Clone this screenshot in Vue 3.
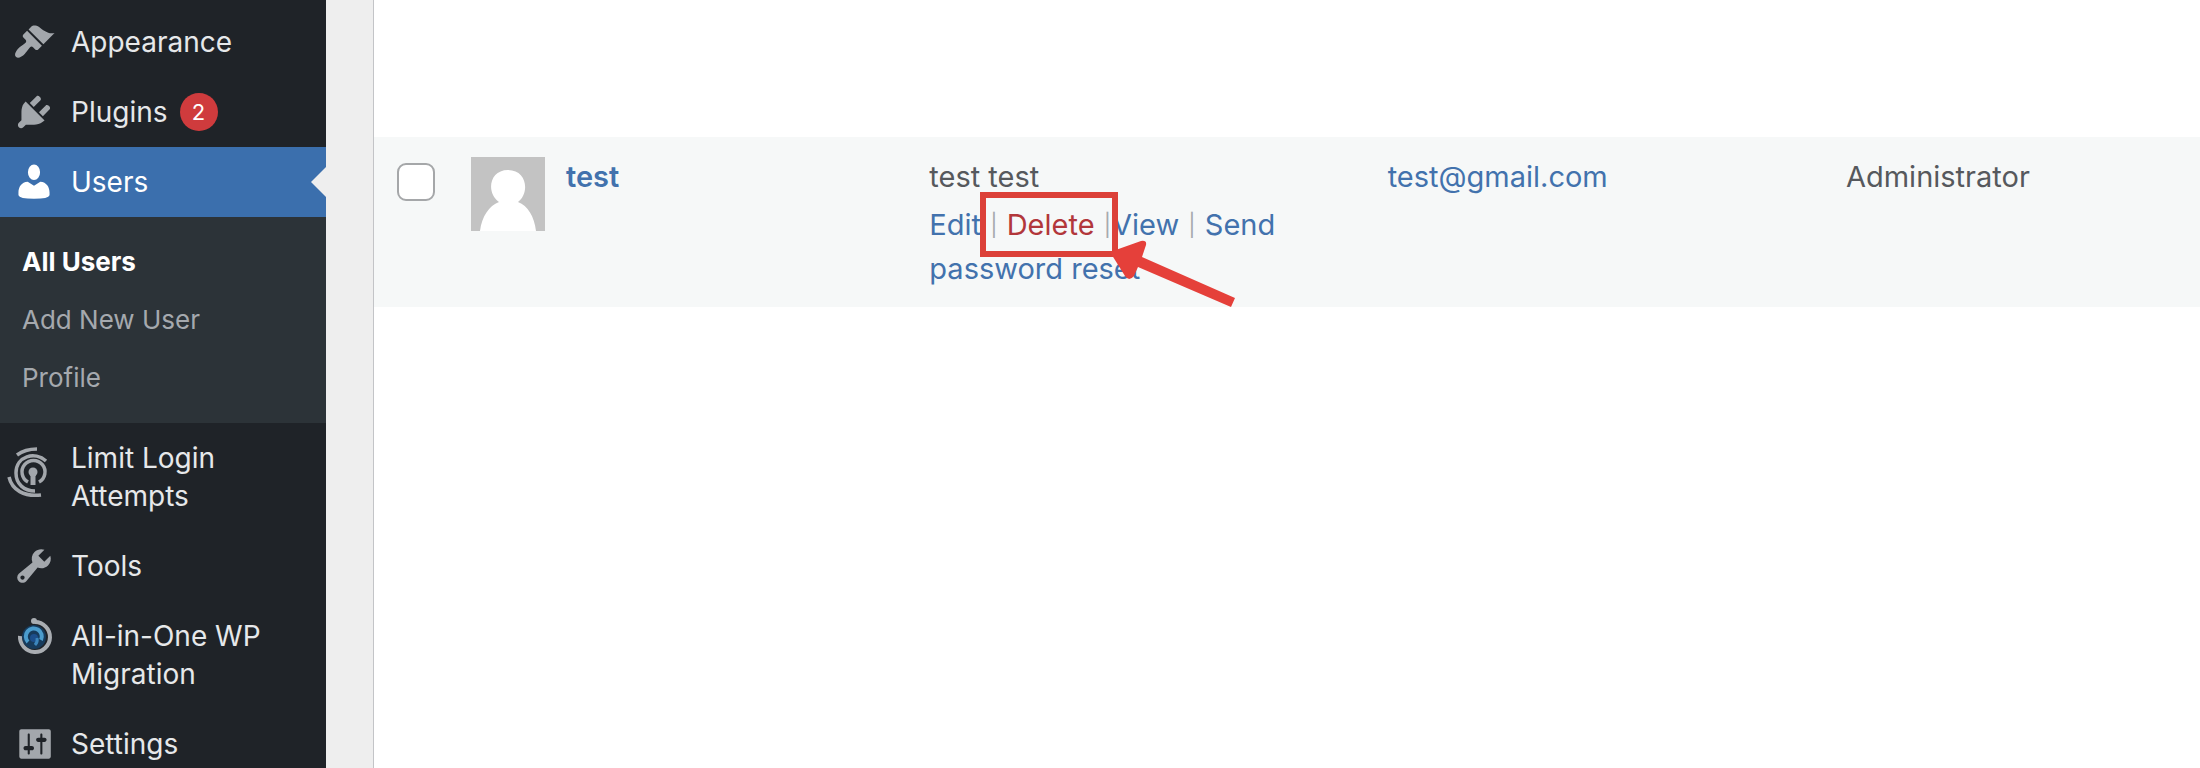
<script setup>
import { ref } from 'vue'

const selected = ref(false)

const icons = {
  appearance: 'M14.48 11.06L7.41 3.99l1.5-1.5c.5-.56 2.3-.47 3.51.32 1.21.8 1.43 1.28 2.91 2.1 1.18.64 2.45 1.26 4.45.85zm-.71.71L6.7 4.7 4.93 6.47c-.39.39-.39 1.02 0 1.41l1.06 1.06c.39.39.39 1.03 0 1.42-.6.6-1.43 1.11-2.21 1.69-.35.26-.7.53-1.01.84C1.43 14.23.4 16.08 1.4 17.07c.99 1 2.84-.03 4.18-1.36.31-.31.58-.66.85-1.02.57-.78 1.08-1.61 1.69-2.21.39-.39 1.02-.39 1.41 0l1.06 1.06c.39.39 1.02.39 1.41 0z',
  plugins: 'M13.11 4.36L9.87 7.6 8 5.73l3.24-3.24c.35-.34 1.05-.2 1.56.32.52.51.66 1.21.31 1.55zm-8 1.77l.91-1.12 9.01 9.01-1.19.84c-.71.71-2.63 1.16-3.82 1.16H6.14L4.9 17.26c-.59.59-1.54.59-2.12 0-.59-.58-.59-1.53 0-2.12l1.24-1.24v-3.88c0-1.13.4-3.19 1.09-3.89zm7.26 3.97l3.24-3.24c.34-.35 1.04-.21 1.55.31.52.51.66 1.21.31 1.55l-3.24 3.25z',
  users: 'M10 1.7a2.9 3.7 0 1 1 0 7.4a2.9 3.7 0 1 1 0-7.4zM7 9.9L10 11.8 13 9.9C16 10.1 17.4 12.5 17.4 15v1.3Q17 18 10 18T2.6 16.3V15C2.6 12.5 4 10.1 7 9.9z',
  tools: 'M16.68 9.77c-1.34 1.34-3.3 1.67-4.95.99l-5.41 6.52c-.99.99-2.59.99-3.58 0s-.99-2.59 0-3.57l6.52-5.42c-.68-1.65-.35-3.61.99-4.95 1.28-1.28 3.12-1.62 4.72-1.06l-2.89 2.89 2.82 2.82 2.86-2.87c.53 1.58.18 3.39-1.08 4.65zM3.81 16.21c.4.39 1.04.39 1.43 0 .4-.4.4-1.04 0-1.43-.39-.4-1.03-.4-1.43 0-.39.39-.39 1.03 0 1.43z',
  settings: 'M18 16V4c0-.55-.45-1-1-1H4c-.55 0-1 .45-1 1v12c0 .55.45 1 1 1h13c.55 0 1-.45 1-1zM8 11h1c.55 0 1 .45 1 1s-.45 1-1 1H8v1.5c0 .28-.22.5-.5.5s-.5-.22-.5-.5V13H6c-.55 0-1-.45-1-1s.45-1 1-1h1V5.5c0-.28.22-.5.5-.5s.5.22.5.5V11zm5-2h-1c-.55 0-1-.45-1-1s.45-1 1-1h1V5.5c0-.28.22-.5.5-.5s.5.22.5.5V7h1c.55 0 1 .45 1 1s-.45 1-1 1h-1v5.5c0 .28-.22.5-.5.5s-.5-.22-.5-.5V9z',
}

const menu = [
  { id: 'appearance', label: 'Appearance' },
  { id: 'plugins', label: 'Plugins', count: 2 },
  { id: 'users', label: 'Users', current: true, children: ['All Users', 'Add New User', 'Profile'] },
  { id: 'limit', label: 'Limit Login Attempts' },
  { id: 'tools', label: 'Tools' },
  { id: 'migration', label: 'All-in-One WP Migration' },
  { id: 'settings', label: 'Settings' },
]
</script>

<template>
  <div class="admin">
    <nav class="sidebar" aria-label="Main menu">
      <ul class="menu">
        <li v-for="item in menu" :key="item.id">
          <a href="#" class="item" :class="[item.id, { current: item.current }]">
            <span class="icon">
              <svg v-if="item.id === 'limit'" class="finger" viewBox="6 17 42 60" aria-hidden="true">
                <g fill="none" stroke="currentColor" stroke-width="3.5">
                  <path d="M17 25Q25 19 37 19" />
                  <path d="M46 31C35 21 16 26 16 43C16 54 24 61 35 61" />
                  <path d="M9 47C12 60 24 67 41 65" />
                  <path d="M28 52A11.5 11.5 0 1 1 39 52" />
                  <path d="M33 42V55" stroke-width="5" />
                </g>
                <circle cx="33" cy="42" r="4.5" fill="currentColor" />
              </svg>
              <svg v-else-if="item.id === 'migration'" viewBox="13 16 42 42" aria-hidden="true">
                <circle cx="34" cy="38" r="12" fill="#173b5c" />
                <path d="M28 43A8 8 0 1 1 41 41" fill="none" stroke="#4b9ccd" stroke-width="4" />
                <circle cx="34" cy="39" r="4" fill="#1d4f8c" />
                <path d="M37 39Q38 43 35 46" fill="none" stroke="#3c86bd" stroke-width="3" />
                <path d="M35 23A15 15 0 1 1 20 37" fill="none" stroke="#a9adb2" stroke-width="4" />
                <circle cx="34" cy="22" r="3" fill="#a9adb2" />
              </svg>
              <svg v-else viewBox="0 0 20 20" aria-hidden="true">
                <path :d="icons[item.id]" fill="currentColor" />
              </svg>
            </span>
            <span class="label">{{ item.label }}</span>
            <span v-if="item.count" class="badge">{{ item.count }}</span>
          </a>
          <ul v-if="item.children" class="submenu">
            <li v-for="(child, i) in item.children" :key="child">
              <a href="#" :class="{ active: i === 0 }">{{ child }}</a>
            </li>
          </ul>
        </li>
      </ul>
    </nav>

    <main class="content">
      <table class="users-table">
        <colgroup>
          <col class="c-check" />
          <col class="c-data" />
          <col class="c-data" />
          <col class="c-data" />
          <col />
        </colgroup>
        <tbody>
          <tr>
            <td class="check">
              <input v-model="selected" type="checkbox" aria-label="Select test" />
            </td>
            <td>
              <div class="user">
                <svg class="avatar" viewBox="0 0 74 74" aria-hidden="true">
                  <rect width="74" height="74" fill="#c3c3c3" />
                  <path d="M9 74C11 59 18 49 28 45C15 36 18 13 37 13C56 13 59 36 47 45C57 49 63 59 65 74Z" fill="#fff" />
                </svg>
                <a href="#" class="username">test</a>
              </div>
            </td>
            <td>
              <div class="name">
                test test
                <div class="actions">
                  <a href="#">Edit</a> <i>|</i> <a href="#" class="delete">Delete</a> <i>|</i>
                  <a href="#">View</a> <i>|</i> <a href="#">Send password reset</a>
                </div>
                <svg class="callout" viewBox="0 0 260 120" aria-hidden="true">
                  <rect x="3" y="3" width="132" height="59" fill="none" stroke="#dc4038" stroke-width="6" />
                  <path d="M130 60L161 49Q167 48 166 53L162 65L255 106L251 115L158 75L154 84Q149 90 145 84Z" fill="#e5403a" />
                </svg>
              </div>
            </td>
            <td><a href="#">test@gmail.com</a></td>
            <td>Administrator</td>
          </tr>
        </tbody>
      </table>
    </main>
  </div>
</template>

<style>
body {
  margin: 0;
  background: #eeeeee;
}
</style>

<style scoped>
.admin {
  display: flex;
  height: 100vh;
  overflow: hidden;
  box-sizing: border-box;
  font-family: Inter, "Liberation Sans", sans-serif;
  font-size: 28px;
}
a {
  text-decoration: none;
  color: #4272ad;
}
ul {
  list-style: none;
  margin: 0;
  padding: 0;
}
.sidebar {
  flex: none;
  width: 326px;
  padding-top: 7px;
  background: #1f2328;
}
.item {
  position: relative;
  display: flex;
  align-items: flex-start;
  padding: 16px 40px 16px 0;
  line-height: 38px;
  color: #e6e8ea;
}
.item.current {
  background: #3b6fad;
  color: #fff;
}
.item.current::after {
  content: "";
  position: absolute;
  right: 0;
  top: 20px;
  border: 15px solid transparent;
  border-left-width: 0;
  border-right-color: #eeeeee;
}
.item.limit {
  align-items: center;
}
.icon {
  flex: none;
  display: flex;
  align-items: center;
  box-sizing: border-box;
  width: 71px;
  height: 38px;
  padding-left: 13px;
  color: #a3a7ac;
}
.current .icon {
  color: #fff;
}
.limit .icon {
  padding-left: 6px;
}
.icon svg {
  flex: none;
  width: 42px;
  height: 42px;
}
.icon .finger {
  height: 60px;
}
.badge {
  margin-left: 12px;
  width: 38px;
  height: 38px;
  border-radius: 50%;
  background: #cf3b3d;
  color: #fff;
  font-size: 22px;
  text-align: center;
}
.submenu {
  padding: 16px 0;
  background: #2c3338;
}
.submenu a {
  display: block;
  padding-left: 22px;
  font-size: 26px;
  line-height: 58px;
  color: #a5a9ae;
}
.submenu .active {
  color: #fff;
  font-weight: 700;
}
.content {
  flex: 1;
  min-width: 0;
  margin-left: 47px;
  padding-top: 137px;
  background: #fff;
  border-left: 1px solid #c3c4c7;
}
.users-table {
  width: 100%;
  table-layout: fixed;
  border-collapse: collapse;
  background: #f6f8f8;
  color: #56595d;
  font-size: 29px;
  line-height: 44px;
}
.c-check {
  width: 81px;
}
.c-data {
  width: 25.1%;
}
td {
  padding: 18px 16px 16px;
  vertical-align: top;
}
.check {
  padding: 26px 0 0 23px;
  line-height: 0;
}
.check input {
  appearance: none;
  width: 38px;
  height: 38px;
  margin: 0;
  border: 2px solid #a5a7a9;
  border-radius: 9px;
  background: #fff;
}
.user {
  display: flex;
  gap: 21px;
}
.avatar {
  width: 74px;
  height: 74px;
  margin-top: 2px;
}
.username {
  font-weight: 600;
}
.name {
  position: relative;
}
.actions {
  padding-top: 4px;
}
.actions i {
  padding: 0 1px;
  font-size: 22px;
  line-height: 22px;
  vertical-align: 2px;
  font-style: normal;
  color: #a7aaad;
}
.actions .delete {
  color: #b2373b;
}
.callout {
  position: absolute;
  left: 51px;
  top: 37px;
  width: 260px;
  height: 120px;
  pointer-events: none;
}
</style>
